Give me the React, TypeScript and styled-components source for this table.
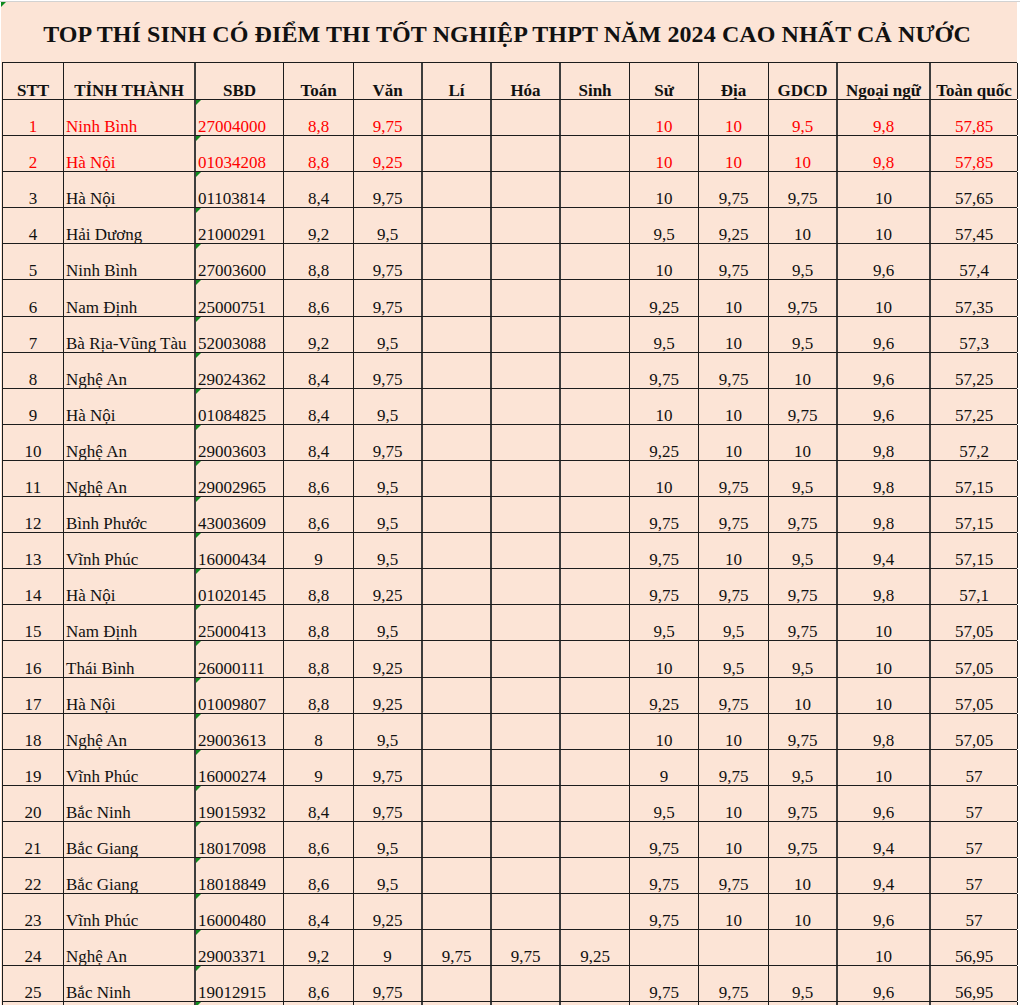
import styled, { createGlobalStyle } from "styled-components";

const GlobalStyle = createGlobalStyle`
  html, body {
    margin: 0;
    padding: 0;
    background: #ffffff;
  }
  body {
    font-family: "Liberation Serif", "Times New Roman", serif;
    overflow: hidden;
  }
`;

type Align = "left" | "center";

type Column = {
  label: string;
  width: number;
  align: Align;
  thick?: boolean;
  flag?: boolean;
};

const columns: Column[] = [
  { label: "STT", width: 61, align: "center" },
  { label: "TỈNH THÀNH", width: 132, align: "left", thick: true },
  { label: "SBD", width: 88, align: "left", flag: true },
  { label: "Toán", width: 70, align: "center" },
  { label: "Văn", width: 69, align: "center", thick: true },
  { label: "Lí", width: 69, align: "center", thick: true },
  { label: "Hóa", width: 69, align: "center", thick: true },
  { label: "Sinh", width: 69, align: "center" },
  { label: "Sử", width: 69, align: "center" },
  { label: "Địa", width: 70, align: "center" },
  { label: "GDCD", width: 69, align: "center", thick: true },
  { label: "Ngoại ngữ", width: 93, align: "center", thick: true },
  { label: "Toàn quốc", width: 87, align: "center" },
];

// STT, tỉnh, SBD, Toán, Văn, Lí, Hóa, Sinh, Sử, Địa, GDCD, NN, Tổng
const rows: string[][] = [
  ["1", "Ninh Bình", "27004000", "8,8", "9,75", "", "", "", "10", "10", "9,5", "9,8", "57,85"],
  ["2", "Hà Nội", "01034208", "8,8", "9,25", "", "", "", "10", "10", "10", "9,8", "57,85"],
  ["3", "Hà Nội", "01103814", "8,4", "9,75", "", "", "", "10", "9,75", "9,75", "10", "57,65"],
  ["4", "Hải Dương", "21000291", "9,2", "9,5", "", "", "", "9,5", "9,25", "10", "10", "57,45"],
  ["5", "Ninh Bình", "27003600", "8,8", "9,75", "", "", "", "10", "9,75", "9,5", "9,6", "57,4"],
  ["6", "Nam Định", "25000751", "8,6", "9,75", "", "", "", "9,25", "10", "9,75", "10", "57,35"],
  ["7", "Bà Rịa-Vũng Tàu", "52003088", "9,2", "9,5", "", "", "", "9,5", "10", "9,5", "9,6", "57,3"],
  ["8", "Nghệ An", "29024362", "8,4", "9,75", "", "", "", "9,75", "9,75", "10", "9,6", "57,25"],
  ["9", "Hà Nội", "01084825", "8,4", "9,5", "", "", "", "10", "10", "9,75", "9,6", "57,25"],
  ["10", "Nghệ An", "29003603", "8,4", "9,75", "", "", "", "9,25", "10", "10", "9,8", "57,2"],
  ["11", "Nghệ An", "29002965", "8,6", "9,5", "", "", "", "10", "9,75", "9,5", "9,8", "57,15"],
  ["12", "Bình Phước", "43003609", "8,6", "9,5", "", "", "", "9,75", "9,75", "9,75", "9,8", "57,15"],
  ["13", "Vĩnh Phúc", "16000434", "9", "9,5", "", "", "", "9,75", "10", "9,5", "9,4", "57,15"],
  ["14", "Hà Nội", "01020145", "8,8", "9,25", "", "", "", "9,75", "9,75", "9,75", "9,8", "57,1"],
  ["15", "Nam Định", "25000413", "8,8", "9,5", "", "", "", "9,5", "9,5", "9,75", "10", "57,05"],
  ["16", "Thái Bình", "26000111", "8,8", "9,25", "", "", "", "10", "9,5", "9,5", "10", "57,05"],
  ["17", "Hà Nội", "01009807", "8,8", "9,25", "", "", "", "9,25", "9,75", "10", "10", "57,05"],
  ["18", "Nghệ An", "29003613", "8", "9,5", "", "", "", "10", "10", "9,75", "9,8", "57,05"],
  ["19", "Vĩnh Phúc", "16000274", "9", "9,75", "", "", "", "9", "9,75", "9,5", "10", "57"],
  ["20", "Bắc Ninh", "19015932", "8,4", "9,75", "", "", "", "9,5", "10", "9,75", "9,6", "57"],
  ["21", "Bắc Giang", "18017098", "8,6", "9,5", "", "", "", "9,75", "10", "9,75", "9,4", "57"],
  ["22", "Bắc Giang", "18018849", "8,6", "9,5", "", "", "", "9,75", "9,75", "10", "9,4", "57"],
  ["23", "Vĩnh Phúc", "16000480", "8,4", "9,25", "", "", "", "9,75", "10", "10", "9,6", "57"],
  ["24", "Nghệ An", "29003371", "9,2", "9", "9,75", "9,75", "9,25", "", "", "", "10", "56,95"],
  ["25", "Bắc Ninh", "19012915", "8,6", "9,75", "", "", "", "9,75", "9,75", "9,5", "9,6", "56,95"],
  ["", "", "", "", "", "", "", "", "", "", "", "", ""],
];

const highlighted = new Set(["1", "2"]);

const TopStrip = styled.div`
  height: 1px;
  background: #ffffff;
  border-bottom: 1px solid #d2d2d2;
`;

const Sheet = styled.div`
  display: flex;
  flex-direction: column;
  width: 1016px;
  margin-left: 1px;
  background: #fce4d6;
`;

const TitleBar = styled.div`
  position: relative;
  height: 60px;
  padding-top: 20px;
  box-sizing: border-box;
  text-align: center;

  &::before {
    content: "";
    position: absolute;
    left: 0;
    top: 0;
    border-top: 5px solid #0f8a1e;
    border-right: 5px solid transparent;
  }
`;

const Title = styled.h1`
  margin: 0 0 0 -4px;
  font-size: 24px;
  line-height: 24px;
  font-weight: 700;
  color: #111111;
  letter-spacing: 0.1px;
`;

const Grid = styled.div`
  display: flex;
  flex-direction: column;
  margin-left: 1px;
`;

const HeaderRow = styled.div`
  display: flex;
  height: 38px;
  box-sizing: border-box;
  border-top: 1px solid #1c1c1c;
  border-bottom: 1px solid #1c1c1c;
  border-left: 1px solid #1c1c1c;
`;

const Row = styled.div`
  display: flex;
  height: 36.1px;
  box-sizing: border-box;
  border-bottom: 1px solid #1c1c1c;
  border-left: 1px solid #1c1c1c;
`;

const CellBase = styled.div<{ $w: number; $align: Align; $thick?: boolean }>`
  position: relative;
  display: flex;
  align-items: flex-end;
  justify-content: ${(p) => (p.$align === "left" ? "flex-start" : "center")};
  width: ${(p) => p.$w}px;
  flex: none;
  box-sizing: border-box;
  padding: 0 2px;
  border-right: ${(p) => (p.$thick ? "2px solid #3d3d3d" : "1px solid #1c1c1c")};
  font-size: 17px;
  line-height: 17px;
  white-space: nowrap;
  overflow: hidden;
`;

const HeadCell = styled(CellBase)`
  font-weight: 700;
  color: #111111;
`;

const Cell = styled(CellBase)<{ $red?: boolean; $flag?: boolean }>`
  color: ${(p) => (p.$red ? "#ff0000" : "#111111")};

  &::before {
    content: "";
    display: ${(p) => (p.$flag ? "block" : "none")};
    position: absolute;
    left: 0;
    top: 0;
    border-top: 5px solid #0f8a1e;
    border-right: 5px solid transparent;
  }
`;

const App = () => {
  const renderRow = (row: string[], index: number) => {
    const red = highlighted.has(row[0]);
    return (
      <Row key={`row_${index}`}>
        {row.map((value, ci) => {
          const col = columns[ci];
          return (
            <Cell
              key={`cell_${index}_${ci}`}
              $w={col.width}
              $align={col.align}
              $thick={col.thick}
              $flag={col.flag}
              $red={red}
            >
              {value}
            </Cell>
          );
        })}
      </Row>
    );
  };

  return (
    <>
      <GlobalStyle />
      <TopStrip />
      <Sheet>
        <TitleBar>
          <Title>TOP THÍ SINH CÓ ĐIỂM THI TỐT NGHIỆP THPT NĂM 2024 CAO NHẤT CẢ NƯỚC</Title>
        </TitleBar>
        <Grid>
          <HeaderRow>
            {columns.map((col) => (
              <HeadCell key={col.label} $w={col.width} $align="center" $thick={col.thick}>
                {col.label}
              </HeadCell>
            ))}
          </HeaderRow>
          {rows.map(renderRow)}
        </Grid>
      </Sheet>
    </>
  );
};

export default App;
